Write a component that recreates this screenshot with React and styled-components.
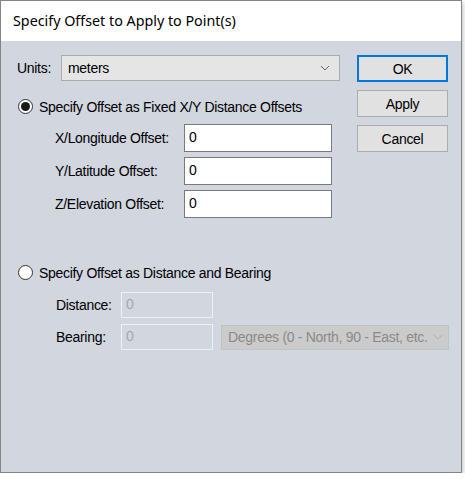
import React from "react";
import styled, { createGlobalStyle } from "styled-components";

const GlobalStyle = createGlobalStyle`
  body {
    margin: 0;
    background: #ffffff;
  }
`;

const Window = styled.div`
  width: 462px;
  height: 473px;
  box-sizing: border-box;
  border: 1px solid #858585;
  box-shadow: 1px 2px 5px rgba(0, 0, 0, 0.25);
  display: flex;
  flex-direction: column;
  font-family: "Liberation Sans", Arial, sans-serif;
  font-size: 14px;
  letter-spacing: -0.3px;
  color: #000;
`;

const TitleBar = styled.div`
  height: 39px;
  background: #ffffff;
  display: flex;
  align-items: center;
  padding-left: 12px;
  font-family: "Noto Sans", "Liberation Sans", sans-serif;
  font-size: 14.3px;
  letter-spacing: 0;
  padding-bottom: 1px;
`;

const Body = styled.div`
  flex: 1;
  background: #d1d6df;
  padding: 14px 13px 0 16px;
`;

const TopSection = styled.div`
  display: flex;
  justify-content: space-between;
`;

const LeftCol = styled.div`
  width: 323px;
  display: flex;
  flex-direction: column;
`;

const ButtonCol = styled.div`
  width: 91px;
  display: flex;
  flex-direction: column;
  gap: 8px;
`;

const Button = styled.div`
  height: 27px;
  box-sizing: border-box;
  background: #e1e1e1;
  border: ${(p) => (p.$default ? "2px solid #0078d7" : "1px solid #adadad")};
  display: flex;
  align-items: center;
  justify-content: center;
`;

const Row = styled.div`
  display: flex;
  align-items: center;
  margin-top: ${(p) => p.$top || 0}px;
  padding-left: ${(p) => p.$indent || 0}px;
`;

const Label = styled.span`
  width: ${(p) => p.$w}px;
  flex: none;
`;

const Combo = styled.div`
  width: ${(p) => p.$w}px;
  height: ${(p) => p.$h || 26}px;
  flex: none;
  box-sizing: border-box;
  background: ${(p) => (p.$disabled ? "#cbcbcb" : "#e5e5e5")};
  border: 1px solid ${(p) => (p.$disabled ? "#c2c2c2" : "#acacac")};
  color: ${(p) => (p.$disabled ? "#8a8a8a" : "#000")};
  display: flex;
  align-items: center;
  justify-content: space-between;
  gap: 5px;
  padding: 0 9px 0 6px;
  margin-left: ${(p) => p.$ml || 0}px;
  white-space: nowrap;
  overflow: hidden;
`;

const Radio = styled.span`
  width: 15px;
  height: 15px;
  box-sizing: border-box;
  border-radius: 50%;
  border: 1px solid #333;
  background: #fff;
  display: flex;
  align-items: center;
  justify-content: center;
  margin-left: 1px;
  margin-right: 6px;
  flex: none;
  &::after {
    content: "";
    display: ${(p) => (p.$checked ? "block" : "none")};
    width: 9px;
    height: 9px;
    border-radius: 50%;
    background: #1a1a1a;
  }
`;

const Field = styled.input`
  width: ${(p) => p.$w}px;
  height: ${(p) => p.$h}px;
  flex: none;
  box-sizing: border-box;
  margin: 0;
  padding: 0 0 3px 4px;
  font: inherit;
  letter-spacing: 0;
  outline: none;
  background: ${(p) => (p.disabled ? "#d1d6df" : "#ffffff")};
  border: 1px solid ${(p) => (p.disabled ? "#eef0f3" : "#7a7a7a")};
  color: ${(p) => (p.disabled ? "#a3a6ab" : "#000")};
  -webkit-text-fill-color: ${(p) => (p.disabled ? "#a3a6ab" : "#000")};
  opacity: 1;
`;

const Chevron = ({ color }) => (
  <svg width="10" height="6" viewBox="0 0 10 6" style={{ flex: "none" }}>
    <polyline points="1,1 5,5 9,1" fill="none" stroke={color} strokeWidth="1" />
  </svg>
);

const offsets = [
  { label: "X/Longitude Offset:", top: 9 },
  { label: "Y/Latitude Offset:", top: 5 },
  { label: "Z/Elevation Offset:", top: 5 },
];

export default function App() {
  return (
    <>
      <GlobalStyle />
      <Window>
        <TitleBar>Specify Offset to Apply to Point(s)</TitleBar>
        <Body>
          <TopSection>
            <LeftCol>
              <Row>
                <Label $w={44}>Units:</Label>
                <Combo $w={279}>
                  <span>meters</span>
                  <Chevron color="#666" />
                </Combo>
              </Row>
              <Row $top={17} style={{ height: 17 }}>
                <Radio $checked />
                Specify Offset as Fixed X/Y Distance Offsets
              </Row>
              {offsets.map((o) => (
                <Row key={o.label} $top={o.top} $indent={38}>
                  <Label $w={129}>{o.label}</Label>
                  <Field $w={148} $h={28} defaultValue="0" readOnly />
                </Row>
              ))}
            </LeftCol>
            <ButtonCol>
              <Button $default>OK</Button>
              <Button>Apply</Button>
              <Button>Cancel</Button>
            </ButtonCol>
          </TopSection>

          <Row $top={46} style={{ height: 17 }}>
            <Radio />
            Specify Offset as Distance and Bearing
          </Row>
          <Row $top={11} $indent={39}>
            <Label $w={65}>Distance:</Label>
            <Field $w={92} $h={26} defaultValue="0" disabled />
          </Row>
          <Row $top={6} $indent={39}>
            <Label $w={65}>Bearing:</Label>
            <Field $w={92} $h={26} defaultValue="0" disabled />
            <Combo $w={228} $h={25} $ml={8} $disabled>
              <span>Degrees (0 - North, 90 - East, etc.</span>
              <Chevron color="#b0b0b0" />
            </Combo>
          </Row>
        </Body>
      </Window>
    </>
  );
}
